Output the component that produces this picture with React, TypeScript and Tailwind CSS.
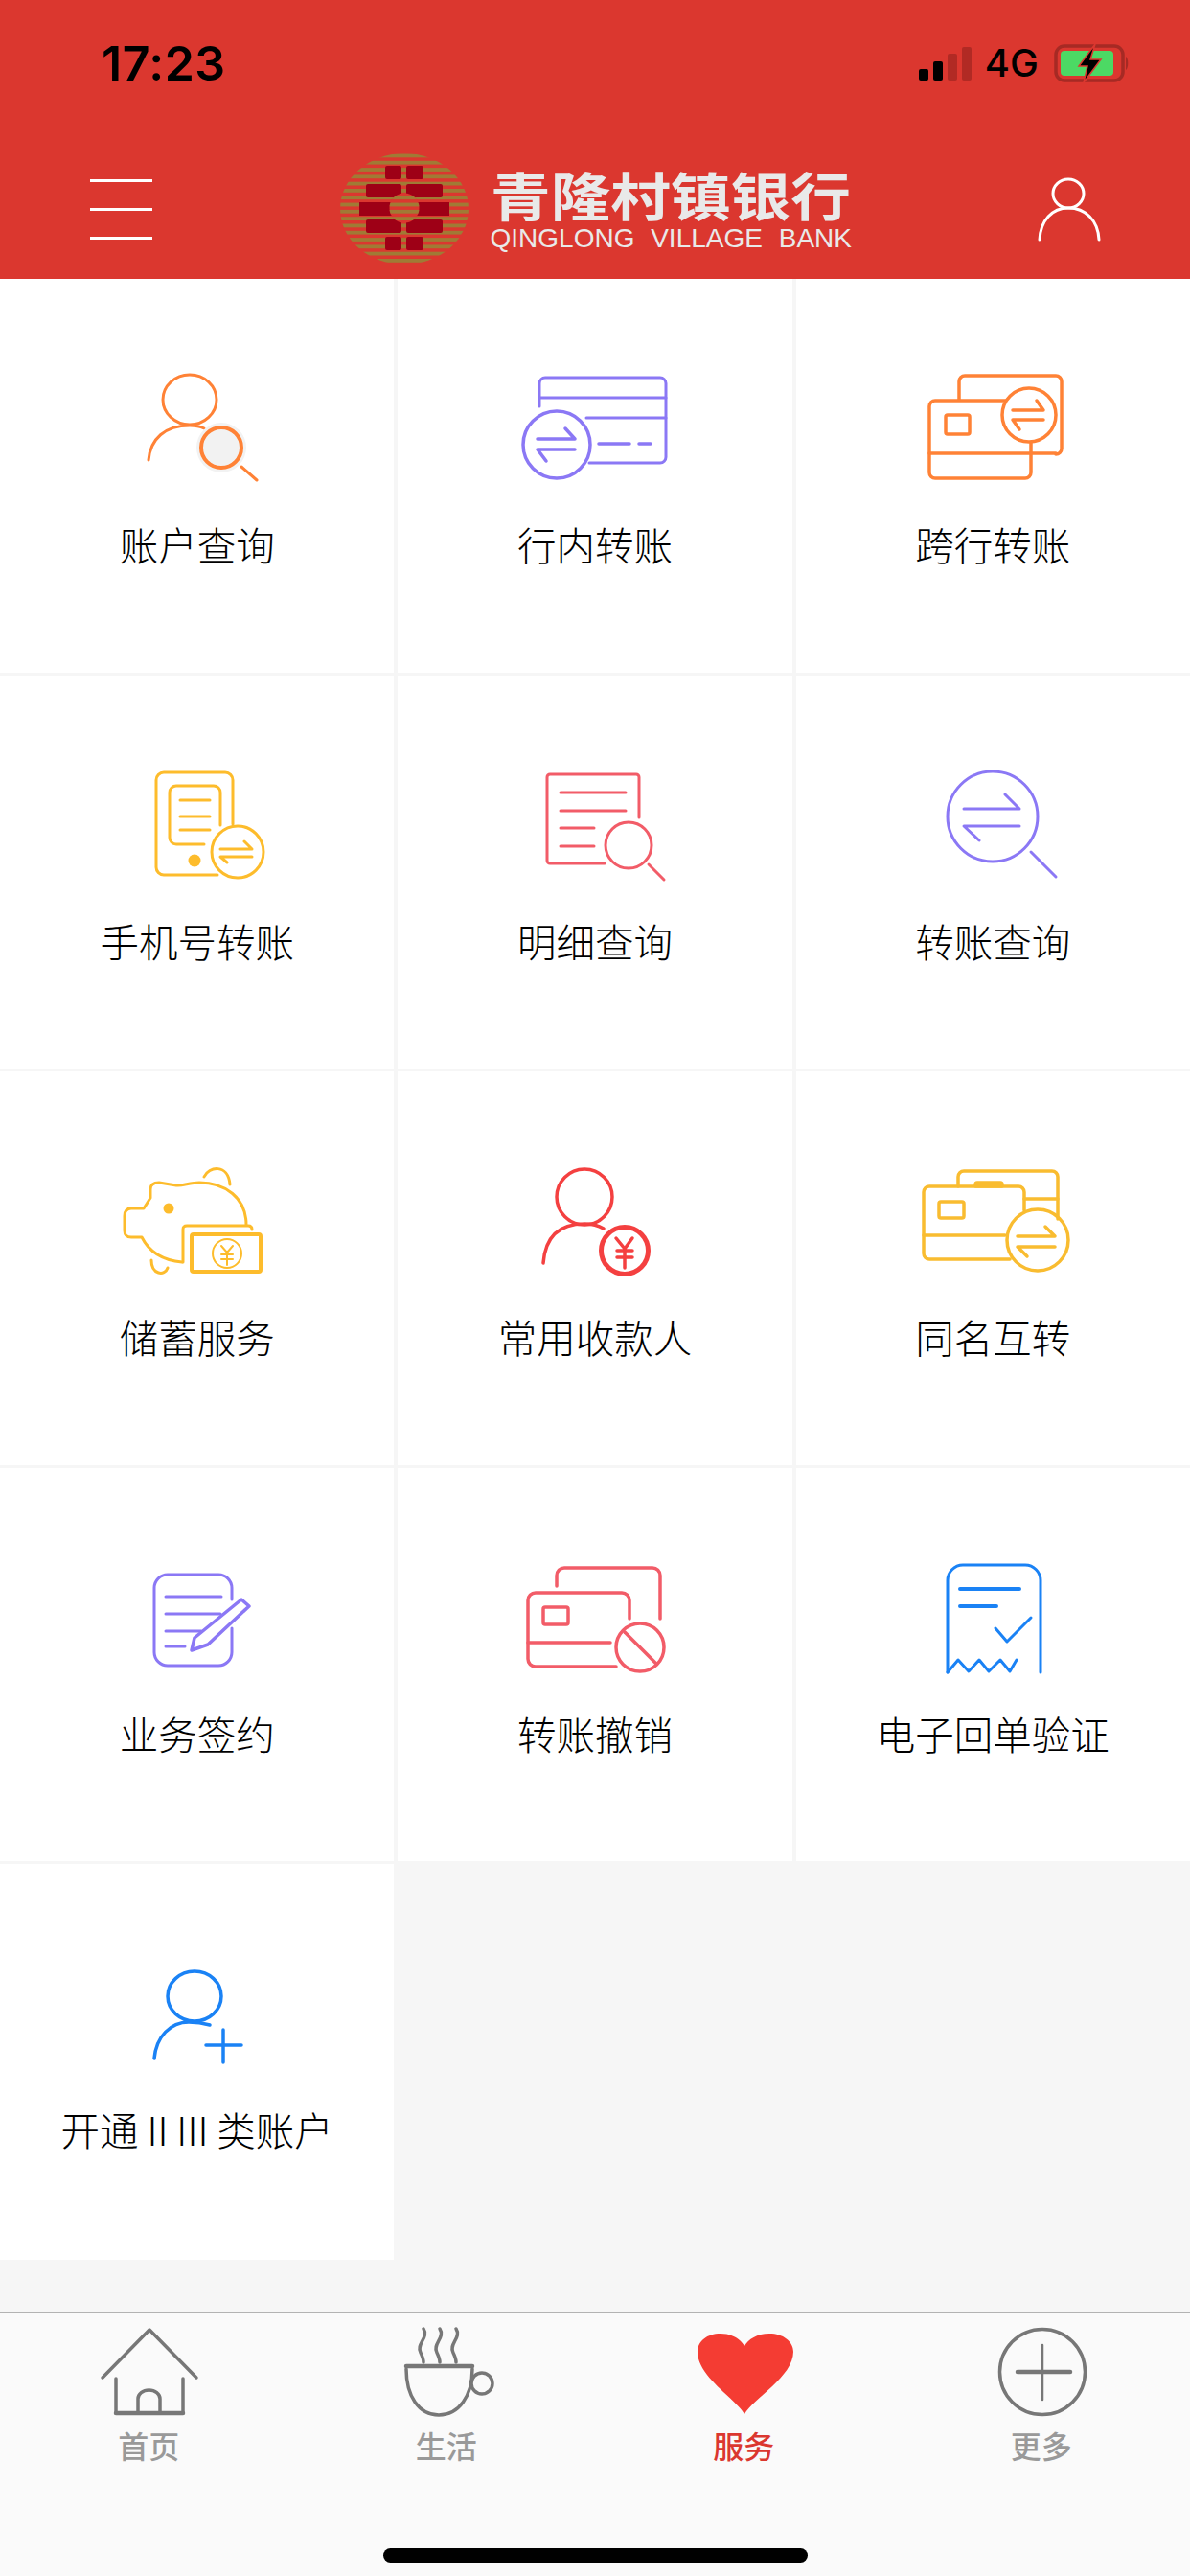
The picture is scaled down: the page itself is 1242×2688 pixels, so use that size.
import React from 'react'

const PURPLE = '#8b78f5'
const ORANGE = '#ff8236'
const YELLOW = '#fdbc2c'
const PINK = '#f25c68'
const RED = '#f44040'
const BLUE = '#1a82f5'
const GREY = '#777777'

// icon paths are written in screen coordinates, the viewBox picks the window per cell
const Icon = ({ box, color, width = 3, children }: { box: string; color: string; width?: number; children: React.ReactNode }) => (
    <svg viewBox={box} fill="none" stroke={color} strokeWidth={width} strokeLinecap="round" strokeLinejoin="round" className="mt-[90px] h-[130px] w-[200px] shrink-0">
        {children}
    </svg>
)

const menuItems: { label: string; icon: React.ReactNode }[] = [
    {
        label: '账户查询',
        icon: (
            <Icon box="106 381 200 130" color={ORANGE}>
                <ellipse cx="198" cy="417" rx="28" ry="26" />
                <path d="M155 480C157 458 172 444 198 444C204 444 209 445 213 447" />
                <circle cx="231" cy="467" r="26" fill="#f2f2f2" stroke="none" />
                <circle cx="231" cy="467" r="21" fill="#f2f2f2" strokeWidth={4} />
                <path d="M252 487L268 501" />
            </Icon>
        ),
    },
    {
        label: '行内转账',
        icon: (
            <Icon box="521 381 200 130" color={PURPLE}>
                <path d="M563 424V400a6 6 0 0 1 6-6H689a6 6 0 0 1 6 6V477a6 6 0 0 1-6 6H615" />
                <path d="M563 415H695M612 436H695" />
                <circle cx="581" cy="464" r="35" strokeWidth={3.5} />
                <path d="M561 458H600L590 447M600 469H561L570 481" strokeWidth={3.5} />
                <path d="M625 463H657M667 463H679" strokeWidth={3.5} />
            </Icon>
        ),
    },
    {
        label: '跨行转账',
        icon: (
            <Icon box="937 381 200 130" color={ORANGE} width={3.5}>
                <path d="M1002 417V398a6 6 0 0 1 6-6h95a6 6 0 0 1 6 6v70a6 6 0 0 1-6 6" />
                <path d="M1050 418H977a6 6 0 0 0-6 6v69a6 6 0 0 0 6 6h94a6 6 0 0 0 6-6V462" />
                <path d="M971 473H1103" />
                <rect x="988" y="433" width="25" height="20" rx="2" />
                <circle cx="1075" cy="433" r="28" />
                <path d="M1058 428H1090L1083 418M1090 438H1058L1065 448" />
            </Icon>
        ),
    },
    {
        label: '手机号转账',
        icon: (
            <Icon box="106 794 200 130" color={YELLOW}>
                <path d="M243 859V813a8 8 0 0 0-8-8H171a8 8 0 0 0-8 8V904a8 8 0 0 0 8 8H227" />
                <path d="M230 860V826a7 7 0 0 0-7-7H184a7 7 0 0 0-7 7V873a7 7 0 0 0 7 7H213" />
                <path d="M188 834H219M188 851H219M188 865H219" />
                <circle cx="203" cy="897" r="6.5" fill={YELLOW} stroke="none" />
                <circle cx="248" cy="888" r="27" />
                <path d="M230 885H263L255 877M263 893H230L237 899" />
            </Icon>
        ),
    },
    {
        label: '明细查询',
        icon: (
            <Icon box="521 794 200 130" color={PINK}>
                <path d="M667 852V810a3 3 0 0 0-3-3H574a3 3 0 0 0-3 3V897a3 3 0 0 0 3 3H631" />
                <path d="M585 826H653M585 845H653M585 863H620M585 882H620" />
                <circle cx="656" cy="881" r="24" />
                <path d="M677 901L693 917" />
            </Icon>
        ),
    },
    {
        label: '转账查询',
        icon: (
            <Icon box="937 794 200 130" color={PURPLE}>
                <circle cx="1037" cy="851" r="47" />
                <path d="M1007 843H1065L1050 828M1065 861H1007L1023 876" />
                <path d="M1077 888L1103 914" />
            </Icon>
        ),
    },
    {
        label: '储蓄服务',
        icon: (
            <Icon box="106 1208 200 130" color={YELLOW}>
                <path d="M213 1228C218 1217 238 1214 240 1236" />
                <path d="M257 1278C257 1250 235 1234 208 1234C198 1234 190 1238 184 1237L166 1234C160 1234 157 1236 157 1241V1250L150 1261H137C132 1261 130 1264 130 1269V1284C130 1289 132 1291 137 1291H148C155 1305 168 1315 190 1317" />
                <path d="M191 1317V1283C191 1280 192 1279 195 1279H259C262 1279 263 1281 263 1283" />
                <rect x="200" y="1288" width="72" height="39" rx="2" strokeWidth={4} />
                <circle cx="237" cy="1308" r="15" strokeWidth={2} />
                <path d="M231 1300L237 1307L243 1300M231 1309H243M231 1314H243M237 1307V1320" strokeWidth={2} />
                <path d="M158 1315C158 1330 172 1332 175 1323" />
                <circle cx="176" cy="1261" r="5.5" fill={YELLOW} stroke="none" />
            </Icon>
        ),
    },
    {
        label: '常用收款人',
        icon: (
            <Icon box="521 1208 200 130" color={RED}>
                <circle cx="610" cy="1249" r="29" strokeWidth={3.5} />
                <path d="M567 1318C569 1292 582 1277 610 1277C618 1277 625 1279 630 1282" strokeWidth={3.5} />
                <circle cx="652" cy="1305" r="24.5" strokeWidth={5} />
                <path d="M643 1292L652 1303L660 1292M644 1305H660M644 1312H660M652 1303V1323" strokeWidth={3.5} />
            </Icon>
        ),
    },
    {
        label: '同名互转',
        icon: (
            <Icon box="937 1208 200 130" color="#f9bc30" width={3.5}>
                <path d="M1001 1238V1228a6 6 0 0 1 6-6h92a6 6 0 0 1 6 6V1272" />
                <path d="M1019 1238V1236a2 2 0 0 1 2-2h24a2 2 0 0 1 2 2V1238Z" fill="#f9bc30" />
                <path d="M1070 1251H1105" />
                <path d="M1070 1263V1244a6 6 0 0 0-6-6H971a6 6 0 0 0-6 6V1308a6 6 0 0 0 6 6H1055" />
                <rect x="981" y="1254" width="26" height="17" rx="2" />
                <path d="M965 1289H1050" />
                <circle cx="1084" cy="1294" r="32" />
                <path d="M1063 1290H1102L1092 1280M1102 1301H1063L1073 1311" />
            </Icon>
        ),
    },
    {
        label: '业务签约',
        icon: (
            <Icon box="106 1621 200 130" color={PURPLE}>
                <path d="M242 1668V1656a14 14 0 0 0-14-14H175a14 14 0 0 0-14 14V1723a14 14 0 0 0 14 14H228a14 14 0 0 0 14-14V1698" />
                <path d="M173 1665H231M173 1683H230M173 1701H210M173 1717H193" />
                <path d="M200 1721L203 1708L252 1668L260 1675L217 1715Z" fill="#ffffff" strokeWidth={3.5} />
            </Icon>
        ),
    },
    {
        label: '转账撤销',
        icon: (
            <Icon box="521 1621 200 130" color={PINK} width={3.5}>
                <path d="M581 1654V1643a8 8 0 0 1 8-8H681a8 8 0 0 1 8 8V1688" />
                <path d="M657 1688V1669a8 8 0 0 0-8-8H559a8 8 0 0 0-8 8V1730a8 8 0 0 0 8 8H643" />
                <path d="M551 1713H637" />
                <rect x="567" y="1676" width="26" height="18" rx="2" />
                <circle cx="668" cy="1718" r="25" />
                <path d="M652 1702L685 1735" />
            </Icon>
        ),
    },
    {
        label: '电子回单验证',
        icon: (
            <Icon box="937 1621 200 130" color={BLUE}>
                <path d="M990 1744V1648a16 16 0 0 1 16-16H1071a16 16 0 0 1 16 16V1744" />
                <path d="M990 1744L1001 1731L1012 1743L1023 1731L1033 1743L1045 1731L1055 1743L1062 1731" />
                <path d="M1003 1657H1065M1003 1675H1041" strokeWidth={4} />
                <path d="M1040 1698L1052 1712L1077 1687" />
            </Icon>
        ),
    },
    {
        label: '开通 II III 类账户',
        icon: (
            <Icon box="106 2034 200 130" color={BLUE} width={3.5}>
                <ellipse cx="203" cy="2082" rx="28" ry="26" />
                <path d="M161 2147C163 2124 178 2109 197 2109C205 2109 212 2110 219 2112" />
                <path d="M215 2133H252M233 2117V2151" />
            </Icon>
        ),
    },
]

const stripeRows = Array.from({ length: 16 }, (_, i) => 161.5 + i * 7.3)

const Stripes = ({ clip }: { clip: string }) => (
    <g clipPath={clip} fill="#a07a35">
        {stripeRows.map((y) => (
            <rect key={y} x="350" y={y} width="145" height="3.8" />
        ))}
    </g>
)

const LogoMark = () => (
    <svg viewBox="350 158 145 122" className="h-[122px] w-[145px] shrink-0">
        <defs>
            <clipPath id="logo-outer">
                <ellipse cx="421" cy="219" rx="67" ry="58" />
            </clipPath>
            <clipPath id="logo-inner">
                <ellipse cx="421" cy="218" rx="15.5" ry="15.5" />
            </clipPath>
        </defs>
        <Stripes clip="url(#logo-outer)" />
        <g fill="#9e0016">
            <rect x="401" y="174" width="17" height="14" rx="2" />
            <rect x="423" y="174" width="18" height="14" rx="2" />
            <rect x="381" y="193" width="37" height="14" rx="2" />
            <rect x="423" y="193" width="38" height="14" rx="2" />
            <rect x="374" y="212" width="94" height="14" />
            <rect x="381" y="230" width="37" height="14" rx="2" />
            <rect x="423" y="230" width="38" height="14" rx="2" />
            <rect x="401" y="248" width="17" height="14" rx="2" />
            <rect x="423" y="248" width="18" height="14" rx="2" />
        </g>
        <ellipse cx="421" cy="218" rx="15.5" ry="15.5" fill="#db372f" />
        <Stripes clip="url(#logo-inner)" />
    </svg>
)

const tabs = [
    {
        label: '首页',
        active: false,
        icon: (
            <svg viewBox="95 2425 120 100" fill="none" stroke={GREY} strokeWidth={3.5} strokeLinecap="round" strokeLinejoin="round" className="h-[100px] w-[120px]">
                <path d="M107 2481L156 2431L205 2481" />
                <path d="M121 2482V2518H191V2482" />
                <path d="M144 2518V2503a11.500 9 0 0 1 23 0V2518" />
                <path d="M121 2518H191" strokeWidth={4.5} />
            </svg>
        ),
    },
    {
        label: '生活',
        active: false,
        icon: (
            <svg viewBox="405 2425 120 100" fill="none" stroke={GREY} strokeWidth={3.5} strokeLinecap="round" strokeLinejoin="round" className="h-[100px] w-[120px]">
                <path d="M441 2430C447 2439 433 2446 438 2455C440 2459 441 2461 441 2465" />
                <path d="M458 2430C464 2439 450 2446 455 2455C457 2459 458 2461 458 2465" />
                <path d="M475 2430C481 2439 467 2446 472 2455C474 2459 475 2461 475 2465" />
                <path d="M423 2469H492" strokeWidth={4.5} />
                <path d="M423 2472C423 2500 436 2520 457 2520C478 2520 492 2500 492 2472" />
                <ellipse cx="502" cy="2487" rx="11" ry="11" />
            </svg>
        ),
    },
    {
        label: '服务',
        active: true,
        icon: (
            <svg viewBox="716 2425 120 100" className="h-[100px] w-[120px]">
                <path fill="#f43c33" d="M777 2519C768 2503 728 2480 728 2454C728 2443 738 2435 752 2435C764 2435 773 2441 777 2448C781 2441 790 2435 803 2435C817 2435 828 2443 828 2454C828 2480 786 2503 777 2519Z" />
            </svg>
        ),
    },
    {
        label: '更多',
        active: false,
        icon: (
            <svg viewBox="1027 2425 120 100" fill="none" stroke={GREY} strokeWidth={3.5} strokeLinecap="round" className="h-[100px] w-[120px]">
                <circle cx="1088" cy="2475" r="44.500" />
                <path d="M1062 2475H1117" strokeWidth={4.5} />
                <path d="M1088 2447V2504" strokeWidth={2.5} />
            </svg>
        ),
    },
]

const StatusBar = () => (
    <div className="mb-[14px] flex h-[132px] items-center justify-between pl-[106px] pr-[62px]">
        <span className="text-[50px] leading-none font-semibold tracking-[0.5px] text-black [font-family:Inter,sans-serif]">17:23</span>
        <div className="flex items-center">
            <div className="flex h-[35px] items-end gap-[5px]">
                <div className="h-[12px] w-[10px] rounded-[2px] bg-black" />
                <div className="h-[20px] w-[10px] rounded-[2px] bg-black" />
                <div className="h-[28px] w-[10px] rounded-[2px] bg-[#b12a24]" />
                <div className="h-[35px] w-[10px] rounded-[2px] bg-[#b12a24]" />
            </div>
            <span className="ml-[14px] text-[40px] leading-none font-medium text-black [font-family:Inter,sans-serif]">4G</span>
            <svg viewBox="0 0 80 40" className="ml-[16px] h-[40px] w-[80px]">
                <rect x="2" y="2" width="70" height="36" rx="9" fill="none" stroke="#a62a24" strokeWidth="3.500" />
                <rect x="7" y="7" width="55" height="26" rx="4" fill="#4cd964" />
                <path d="M75 13C78 15 78 25 75 27Z" fill="#a62a24" />
                <path d="M43 0L26 23H35L31 40L49 16H38Z" fill="#000000" stroke="#db372f" strokeWidth="1.500" />
            </svg>
        </div>
    </div>
)

const NavBar = () => (
    <div className="flex h-[145px] items-center justify-between pb-[1px] pl-[94px] pr-[90px]">
        <div className="flex w-[65px] flex-col gap-[27px]">
            <div className="h-[3px] bg-white" />
            <div className="h-[3px] bg-white" />
            <div className="h-[3px] bg-white" />
        </div>
        <div className="flex items-center">
            <LogoMark />
            <div className="ml-[16px] flex w-[377px] flex-col text-[#e9e9e9]">
                <span className="h-[56px] origin-left scale-x-[1.16] text-[54px] leading-[56px] font-bold whitespace-nowrap [font-family:'Noto_Sans_CJK_SC',sans-serif]">青隆村镇银行</span>
                <span className="mt-[6px] text-[28px] leading-[24px] [word-spacing:9px] whitespace-nowrap [font-family:'Liberation_Sans',sans-serif]">QINGLONG VILLAGE BANK</span>
            </div>
        </div>
        <svg viewBox="1080 182 72 72" fill="none" stroke="#ffffff" strokeWidth={3} strokeLinecap="round" className="h-[72px] w-[72px]">
            <ellipse cx="1115" cy="202" rx="16" ry="15" />
            <path d="M1085 250C1086 230 1098 217 1115 217C1133 217 1146 230 1147 250" />
        </svg>
    </div>
)

const App = () => {
    return (
        <div className="flex min-h-screen w-[1242px] flex-col bg-[#f6f6f6] [font-family:'Noto_Sans_CJK_SC',sans-serif]">
            <header className="shrink-0 bg-[#db372f]">
                <StatusBar />
                <NavBar />
            </header>
            <main className="flex-1">
                <div className="grid grid-cols-3 grid-rows-[410.5px_410.5px_410.5px_410.5px_413px] gap-x-[4px] gap-y-[3px]">
                    {menuItems.map((item) => (
                        <div key={item.label} className="flex flex-col items-center bg-white">
                            {item.icon}
                            <span className="mt-[29px] text-[40.5px] leading-[56px] font-light whitespace-nowrap text-black">{item.label}</span>
                        </div>
                    ))}
                </div>
            </main>
            <footer className="flex h-[276px] shrink-0 flex-col border-t-2 border-[#b3b3b3] bg-[#fafafa]">
                <div className="grid grid-cols-4 pt-[11px]">
                    {tabs.map((tab) => (
                        <div key={tab.label} className="flex flex-col items-center">
                            {tab.icon}
                            <span className={tab.active ? 'mt-[6px] text-[32px] leading-[40px] font-medium text-[#db372f]' : 'mt-[6px] text-[32px] leading-[40px] font-medium text-[#999999]'}>
                                {tab.label}
                            </span>
                        </div>
                    ))}
                </div>
                <div className="mt-[88px] flex justify-center">
                    <div className="h-[15px] w-[443px] rounded-full bg-black" />
                </div>
            </footer>
        </div>
    )
}

export default App
